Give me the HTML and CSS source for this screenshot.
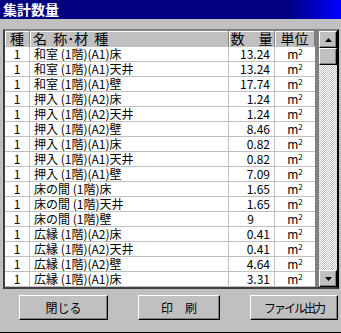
FILE: index.html
```html
<!DOCTYPE html>
<html lang="ja">
  <head>
    <meta charset="UTF-8" />
    <title>集計数量</title>
    <link rel="stylesheet" href="styles.css">
  </head>
  <body>
    <div class="window">
      <div class="titlebar">集計数量</div>
      <div class="list">
        <div class="grid">
          <div class="row head">
            <div class="cell c1">種</div>
            <div class="cell c2">名 称･材 種</div>
            <div class="cell c3">数　量</div>
            <div class="cell c4">単位</div>
          </div>
          <div class="row"><div class="cell c1">1</div><div class="cell c2">和室 (1階)(A1)床</div><div class="cell c3">13.24</div><div class="cell c4">m<sup>2</sup></div></div>
          <div class="row"><div class="cell c1">1</div><div class="cell c2">和室 (1階)(A1)天井</div><div class="cell c3">13.24</div><div class="cell c4">m<sup>2</sup></div></div>
          <div class="row"><div class="cell c1">1</div><div class="cell c2">和室 (1階)(A1)壁</div><div class="cell c3">17.74</div><div class="cell c4">m<sup>2</sup></div></div>
          <div class="row"><div class="cell c1">1</div><div class="cell c2">押入 (1階)(A2)床</div><div class="cell c3">1.24</div><div class="cell c4">m<sup>2</sup></div></div>
          <div class="row"><div class="cell c1">1</div><div class="cell c2">押入 (1階)(A2)天井</div><div class="cell c3">1.24</div><div class="cell c4">m<sup>2</sup></div></div>
          <div class="row"><div class="cell c1">1</div><div class="cell c2">押入 (1階)(A2)壁</div><div class="cell c3">8.46</div><div class="cell c4">m<sup>2</sup></div></div>
          <div class="row"><div class="cell c1">1</div><div class="cell c2">押入 (1階)(A1)床</div><div class="cell c3">0.82</div><div class="cell c4">m<sup>2</sup></div></div>
          <div class="row"><div class="cell c1">1</div><div class="cell c2">押入 (1階)(A1)天井</div><div class="cell c3">0.82</div><div class="cell c4">m<sup>2</sup></div></div>
          <div class="row"><div class="cell c1">1</div><div class="cell c2">押入 (1階)(A1)壁</div><div class="cell c3">7.09</div><div class="cell c4">m<sup>2</sup></div></div>
          <div class="row"><div class="cell c1">1</div><div class="cell c2">床の間 (1階)床</div><div class="cell c3">1.65</div><div class="cell c4">m<sup>2</sup></div></div>
          <div class="row"><div class="cell c1">1</div><div class="cell c2">床の間 (1階)天井</div><div class="cell c3">1.65</div><div class="cell c4">m<sup>2</sup></div></div>
          <div class="row"><div class="cell c1">1</div><div class="cell c2">床の間 (1階)壁</div><div class="cell c3"><span class="int">9</span></div><div class="cell c4">m<sup>2</sup></div></div>
          <div class="row"><div class="cell c1">1</div><div class="cell c2">広縁 (1階)(A2)床</div><div class="cell c3">0.41</div><div class="cell c4">m<sup>2</sup></div></div>
          <div class="row"><div class="cell c1">1</div><div class="cell c2">広縁 (1階)(A2)天井</div><div class="cell c3">0.41</div><div class="cell c4">m<sup>2</sup></div></div>
          <div class="row"><div class="cell c1">1</div><div class="cell c2">広縁 (1階)(A2)壁</div><div class="cell c3">4.64</div><div class="cell c4">m<sup>2</sup></div></div>
          <div class="row"><div class="cell c1">1</div><div class="cell c2">広縁 (1階)(A1)床</div><div class="cell c3">3.31</div><div class="cell c4">m<sup>2</sup></div></div>
        </div>
        <div class="gap"></div>
        <div class="scrollbar">
          <div class="sbtn">
            <svg width="7" height="4" viewBox="0 0 7 4"><polygon points="3.5,0 7,4 0,4" fill="#000"/></svg>
          </div>
          <div class="thumb"></div>
          <div class="track"></div>
          <div class="sbtn">
            <svg width="7" height="4" viewBox="0 0 7 4"><polygon points="0,0 7,0 3.5,4" fill="#000"/></svg>
          </div>
        </div>
      </div>
      <div class="buttons">
        <button class="btn b1">閉じる</button>
        <button class="btn b2">印　刷</button>
        <button class="btn b3">ファイル出力</button>
      </div>
    </div>
  </body>
</html>
```

FILE: styles.css
```css
body {
  margin: 0;
  background: #c0c0c0;
  font-family: "Noto Sans CJK JP", "Liberation Sans", sans-serif;
}
.window {
  width: 341px;
  height: 332px;
  border-bottom: 1px solid #000;
  background: #c0c0c0;
}
.titlebar {
  height: 19px;
  line-height: 19px;
  padding-left: 3px;
  color: #fff;
  font-weight: bold;
  font-size: 14px;
  background: linear-gradient(to right, #000080 0%, #000080 84%, #0000ff 100%);
}
.list {
  display: flex;
  margin: 10px 0 0 3px;
  width: 332px;
  border: 2px solid;
  border-color: #808080 #000 #404040 #404040;
}
.grid {
  width: 310px;
  background: #fff;
}
.row {
  display: grid;
  grid-template-columns: 25px 199px 46px 40px;
  height: 14px;
  border-bottom: 1px solid #c0c0c0;
  font-size: 12px;
  line-height: 14px;
  color: #000;
}
.cell {
  border-right: 1px solid #c0c0c0;
  white-space: nowrap;
}
.c1 {
  text-align: center;
}
.c2 {
  padding-left: 4px;
}
.c3 {
  text-align: right;
  padding-right: 4px;
}
.c4 {
  text-align: center;
  border-right: none;
}
.int {
  padding-right: 16px;
}
sup {
  font-size: 8px;
  line-height: 0;
  vertical-align: 4px;
}
.head {
  height: 15px;
  background: #c0c0c0;
  font-size: 14px;
  line-height: 15px;
}
.head .cell {
  border-right: 1px solid #808080;
  box-shadow: inset 1px 1px #fff;
}
.head .c2 {
  padding-left: 3px;
  word-spacing: 3px;
}
.head .c3 {
  text-align: center;
  padding-right: 0;
}
.gap {
  width: 4px;
  background: #808080;
}
.scrollbar {
  width: 18px;
  display: flex;
  flex-direction: column;
  background-color: #fff;
  background-image: conic-gradient(#c0c0c0 25%, #fff 0 50%, #c0c0c0 0 75%, #fff 0);
  background-size: 2px 2px;
}
.sbtn,
.thumb {
  height: 15px;
  background: #c0c0c0;
  border: 1px solid;
  border-color: #fff #000 #000 #fff;
  box-shadow: inset -1px -1px #808080;
  display: flex;
  align-items: center;
  justify-content: center;
}
.track {
  flex: 1;
}
.buttons {
  display: flex;
  gap: 30px;
  margin: 6px 0 0 19px;
}
.btn {
  height: 25px;
  padding: 0;
  font-family: "Noto Sans CJK JP", "Liberation Sans", sans-serif;
  font-size: 12px;
  color: #000;
  background: #c0c0c0;
  border: 1px solid;
  border-color: #fff #000 #000 #fff;
  box-shadow: inset -1px -1px #808080;
}
.b1 {
  width: 89px;
}
.b2 {
  width: 82px;
}
.b3 {
  width: 88px;
  letter-spacing: -2px;
}
```
